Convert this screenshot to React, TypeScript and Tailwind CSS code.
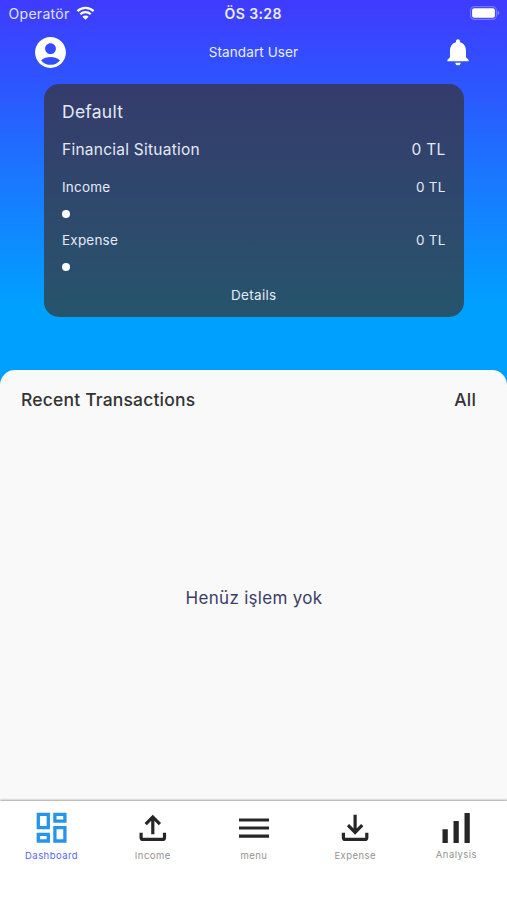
import type { ReactNode } from "react";

interface AmountRowProps {
  label: string;
  amount: string;
  className: string;
}

interface NavItem {
  label: string;
  icon: ReactNode;
  labelClass: string;
}

function WifiIcon() {
  return (
    <svg width="19" height="14" viewBox="0 0 18 14" fill="none" stroke="#fff" strokeWidth="2.3">
      <path d="M0.9 5.1a11.6 11.6 0 0 1 16.2 0" />
      <path d="M3.8 8.3a7.4 7.4 0 0 1 10.4 0" />
      <path d="M9 13.8 5.9 10.7a4.4 4.4 0 0 1 6.2 0z" fill="#fff" stroke="none" />
    </svg>
  );
}

function BatteryIcon() {
  return (
    <svg width="30" height="14" viewBox="0 0 30 14" fill="none">
      <rect x="0.6" y="0.6" width="25.8" height="12.8" rx="3.8" stroke="#fff" strokeOpacity="0.3" strokeWidth="1.1" />
      <rect x="2.1" y="2.2" width="22.8" height="9.6" rx="2" fill="#fff" />
      <path d="M27.6 4.8v4.4c1-.4 1.7-1.2 1.7-2.2s-.7-1.8-1.7-2.2z" fill="#fff" fillOpacity="0.4" />
    </svg>
  );
}

function AccountIcon() {
  return (
    <svg width="37" height="37" viewBox="0 0 24 24" fill="#fff">
      <path d="M12 2C6.48 2 2 6.48 2 12s4.48 10 10 10 10-4.48 10-10S17.52 2 12 2zm0 4c1.93 0 3.5 1.57 3.5 3.5S13.93 13 12 13s-3.5-1.57-3.5-3.5S10.07 6 12 6zm0 14c-2.03 0-4.43-.82-6.14-2.88a9.95 9.95 0 0 1 12.28 0C16.43 19.18 14.03 20 12 20z" />
    </svg>
  );
}

function BellIcon() {
  return (
    <svg width="32" height="32" viewBox="0 0 24 24" fill="#fff">
      <path d="M12 22c1.1 0 2-.9 2-2h-4c0 1.1.89 2 2 2zm6-6v-5c0-3.07-1.64-5.64-4.5-6.32V4c0-.83-.67-1.5-1.5-1.5s-1.5.67-1.5 1.5v.68C7.63 5.36 6 7.92 6 11v5l-2 2v1h16v-1l-2-2z" />
    </svg>
  );
}

function DashboardIcon() {
  return (
    <svg width="32" height="32" viewBox="0 0 32 32" fill="none" stroke="#2694ec" strokeWidth="3.3">
      <path d="M2.3 2.4h10v13.3h-10zM18.9 2.4h10v6.7h-10zM2.3 22.3h10V29h-10zM18.9 15.7h10V29h-10z" />
    </svg>
  );
}

function UploadIcon() {
  return (
    <svg width="32" height="32" viewBox="0 0 32 32" fill="none" stroke="#262626" strokeWidth="3.2">
      <path d="M4.1 20.8v4.6a2 2 0 0 0 2 2h19.400a2 2 0 0 0 2-2v-4.600" />
      <path d="M15.800 22.300V5M8.700 12.200 15.800 5l7.100 7.200" />
    </svg>
  );
}

function DownloadIcon() {
  return (
    <svg width="32" height="32" viewBox="0 0 32 32" fill="none" stroke="#262626" strokeWidth="3.2">
      <path d="M4.4 20.8v4.6a2 2 0 0 0 2 2h19.400a2 2 0 0 0 2-2v-4.600" />
      <path d="M16.100 2.800v17.600M9 13.200l7.100 7.200 7.100-7.200" />
    </svg>
  );
}

function MenuIcon() {
  return (
    <svg width="32" height="32" viewBox="0 0 32 32" fill="none" stroke="#262626" strokeWidth="3.2">
      <path d="M1 8h30M1 16h30M1 24.200h30" />
    </svg>
  );
}

function BarsIcon() {
  return (
    <svg width="32" height="32" viewBox="0 0 32 32" fill="#262626">
      <path d="M2.500 17.200h5.300v13.700H2.500zM13.500 9h5.300v21.900h-5.300zM24.500 1h5.300v29.900h-5.300z" />
    </svg>
  );
}

function AmountRow({ label, amount, className }: AmountRowProps) {
  return (
    <div className={`flex items-center justify-between ${className}`}>
      <span>{label}</span>
      <span>{amount}</span>
    </div>
  );
}

const navItems: NavItem[] = [
  { label: "Dashboard", icon: <DashboardIcon />, labelClass: "mt-[6px] text-[#5b63f2]" },
  { label: "Income", icon: <UploadIcon />, labelClass: "mt-[6px] text-[#929292]" },
  { label: "menu", icon: <MenuIcon />, labelClass: "mt-[6px] text-[#929292]" },
  { label: "Expense", icon: <DownloadIcon />, labelClass: "mt-[6px] text-[#929292]" },
  { label: "Analysis", icon: <BarsIcon />, labelClass: "mt-[5px] text-[#929292]" },
];

export default function App() {
  return (
    <div className="w-[507px] h-[900px] flex flex-col overflow-hidden bg-[#00a0ff] bg-[linear-gradient(180deg,#403bff_0px,#2d55ff_84px,#1a78ff_180px,#00a0ff_305px)] font-['Inter',sans-serif]">
      {/* status bar */}
      <div className="h-[26px] shrink-0 grid grid-cols-3 items-center pl-[8.5px] pr-[7px] text-white">
        <div className="flex items-center gap-[6px]">
          <span className="pt-px text-[14px] tracking-[0.3px] text-white/85">Operatör</span>
          <WifiIcon />
        </div>
        <span className="pt-px pr-[2px] text-center text-[14px] font-semibold tracking-[0.4px] text-white/90">ÖS 3:28</span>
        <div className="flex justify-end">
          <BatteryIcon />
        </div>
      </div>

      {/* header */}
      <div className="h-[52px] shrink-0 grid grid-cols-3 items-center pl-8 pr-[33.5px] text-white">
        <AccountIcon />
        <span className="pl-[1.5px] text-center text-[13.5px] tracking-[0.1px] text-white/90 whitespace-nowrap">Standart User</span>
        <div className="flex justify-end">
          <BellIcon />
        </div>
      </div>

      {/* balance card */}
      <div className="mt-[6px] ml-[43.5px] mr-[43px] h-[233px] shrink-0 flex flex-col rounded-[15px] bg-linear-to-b from-[#343b6c] to-[#26546c] px-[18.5px] text-[#e4e9f5]">
        <div className="mt-4 h-6 leading-6 text-[17.5px] tracking-[0.25px]">Default</div>
        <AmountRow label="Financial Situation" amount="0 TL" className="mt-[15px] h-[22px] text-[15.5px] tracking-[0.25px]" />
        <AmountRow label="Income" amount="0 TL" className="mt-4 h-5 text-[13.5px] tracking-[0.2px]" />
        <div className="mt-[13px] size-2 rounded-full bg-white" />
        <AmountRow label="Expense" amount="0 TL" className="mt-3 h-5 text-[13.5px] tracking-[0.2px]" />
        <div className="mt-[13px] size-2 rounded-full bg-white" />
        <div className="mt-[14px] h-5 leading-5 text-center text-[13.5px] tracking-[0.3px]">Details</div>
      </div>

      {/* transactions */}
      <div className="mt-[53px] flex-1 flex flex-col rounded-t-[15px] bg-[#f9f9f9]">
        <div className="h-[61px] flex items-center justify-between pl-[21px] pr-[31px] text-[17.5px] font-medium tracking-[0.18px] text-[#333]">
          <span>Recent Transactions</span>
          <span>All</span>
        </div>
        <div className="pt-[155px] pl-px text-center text-[17px] tracking-[0.3px] leading-6 text-[#3c3d68]">Henüz işlem yok</div>
      </div>

      {/* bottom navigation */}
      <nav className="h-[99px] shrink-0 grid grid-cols-5 bg-white pt-[11px] pl-px shadow-[0_-1px_2px_rgba(0,0,0,0.35)]">
        {navItems.map((item) => (
          <div key={item.label} className="flex flex-col items-center">
            {item.icon}
            <span className={`text-[9.5px] leading-3 tracking-[0.45px] ${item.labelClass}`}>{item.label}</span>
          </div>
        ))}
      </nav>
    </div>
  );
}
